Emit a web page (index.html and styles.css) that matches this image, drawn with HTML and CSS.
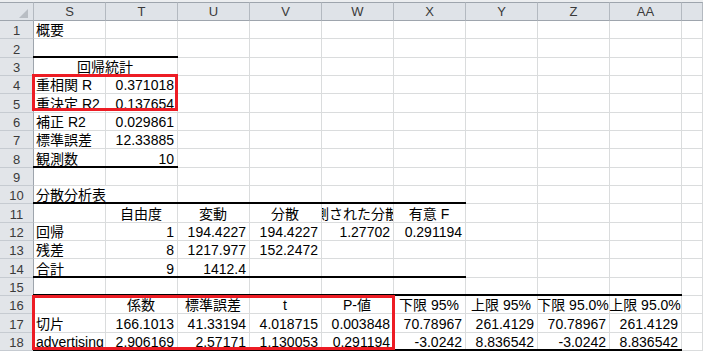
FILE: index.html
```html
<!DOCTYPE html>
<html lang="ja">
<head>
<meta charset="utf-8">
<title>回帰分析</title>
<link rel="stylesheet" href="styles.css">
</head>
<body>
<div class="strip"></div>
<div class="sheet">
  <div class="corner"><svg class="tri" width="9" height="9" viewBox="0 0 9 9"><polygon points="9,0 9,9 0,9" fill="#b8bdc3"/></svg></div>
  <div class="ch">S</div><div class="ch">T</div><div class="ch">U</div><div class="ch">V</div><div class="ch">W</div><div class="ch">X</div><div class="ch">Y</div><div class="ch">Z</div><div class="ch">AA</div><div class="ch"></div>

  <div class="rh">1</div><div class="c">概要</div><div class="c"></div><div class="c"></div><div class="c"></div><div class="c"></div><div class="c"></div><div class="c"></div><div class="c"></div><div class="c"></div><div class="c"></div>

  <div class="rh">2</div><div class="c tb"></div><div class="c tb"></div><div class="c"></div><div class="c"></div><div class="c"></div><div class="c"></div><div class="c"></div><div class="c"></div><div class="c"></div><div class="c"></div>

  <div class="rh">3</div><div class="c m span2">回帰統計</div><div class="c"></div><div class="c"></div><div class="c"></div><div class="c"></div><div class="c"></div><div class="c"></div><div class="c"></div><div class="c"></div>

  <div class="rh">4</div><div class="c">重相関 R</div><div class="c n">0.371018</div><div class="c"></div><div class="c"></div><div class="c"></div><div class="c"></div><div class="c"></div><div class="c"></div><div class="c"></div><div class="c"></div>

  <div class="rh">5</div><div class="c">重決定 R2</div><div class="c n">0.137654</div><div class="c"></div><div class="c"></div><div class="c"></div><div class="c"></div><div class="c"></div><div class="c"></div><div class="c"></div><div class="c"></div>

  <div class="rh">6</div><div class="c">補正 R2</div><div class="c n">0.029861</div><div class="c"></div><div class="c"></div><div class="c"></div><div class="c"></div><div class="c"></div><div class="c"></div><div class="c"></div><div class="c"></div>

  <div class="rh">7</div><div class="c">標準誤差</div><div class="c n">12.33885</div><div class="c"></div><div class="c"></div><div class="c"></div><div class="c"></div><div class="c"></div><div class="c"></div><div class="c"></div><div class="c"></div>

  <div class="rh">8</div><div class="c tb">観測数</div><div class="c n tb">10</div><div class="c"></div><div class="c"></div><div class="c"></div><div class="c"></div><div class="c"></div><div class="c"></div><div class="c"></div><div class="c"></div>

  <div class="rh">9</div><div class="c"></div><div class="c"></div><div class="c"></div><div class="c"></div><div class="c"></div><div class="c"></div><div class="c"></div><div class="c"></div><div class="c"></div><div class="c"></div>

  <div class="rh">10</div><div class="c tb open">分散分析表</div><div class="c tb"></div><div class="c tb"></div><div class="c tb"></div><div class="c tb"></div><div class="c tb"></div><div class="c"></div><div class="c"></div><div class="c"></div><div class="c"></div>

  <div class="rh">11</div><div class="c"></div><div class="c m">自由度</div><div class="c m">変動</div><div class="c m">分散</div><div class="c m clip">観測された分散比</div><div class="c m">有意 F</div><div class="c"></div><div class="c"></div><div class="c"></div><div class="c"></div>

  <div class="rh">12</div><div class="c">回帰</div><div class="c n">1</div><div class="c n">194.4227</div><div class="c n">194.4227</div><div class="c n">1.27702</div><div class="c n">0.291194</div><div class="c"></div><div class="c"></div><div class="c"></div><div class="c"></div>

  <div class="rh">13</div><div class="c">残差</div><div class="c n">8</div><div class="c n">1217.977</div><div class="c n">152.2472</div><div class="c"></div><div class="c"></div><div class="c"></div><div class="c"></div><div class="c"></div><div class="c"></div>

  <div class="rh">14</div><div class="c tb">合計</div><div class="c n tb">9</div><div class="c n tb">1412.4</div><div class="c tb"></div><div class="c tb"></div><div class="c tb"></div><div class="c"></div><div class="c"></div><div class="c"></div><div class="c"></div>

  <div class="rh">15</div><div class="c tb"></div><div class="c tb"></div><div class="c tb"></div><div class="c tb"></div><div class="c tb"></div><div class="c tb"></div><div class="c tb"></div><div class="c tb"></div><div class="c tb"></div><div class="c"></div>

  <div class="rh">16</div><div class="c"></div><div class="c m">係数</div><div class="c m">標準誤差</div><div class="c m">t</div><div class="c m">P-値</div><div class="c m">下限 95%</div><div class="c m">上限 95%</div><div class="c m">下限 95.0%</div><div class="c m">上限 95.0%</div><div class="c"></div>

  <div class="rh">17</div><div class="c">切片</div><div class="c n">166.1013</div><div class="c n">41.33194</div><div class="c n">4.018715</div><div class="c n">0.003848</div><div class="c n">70.78967</div><div class="c n">261.4129</div><div class="c n">70.78967</div><div class="c n">261.4129</div><div class="c"></div>

  <div class="rh">18</div><div class="c tb">advertising</div><div class="c n tb">2.906169</div><div class="c n tb">2.57171</div><div class="c n tb">1.130053</div><div class="c n tb">0.291194</div><div class="c n tb">-3.0242</div><div class="c n tb">8.836542</div><div class="c n tb">-3.0242</div><div class="c n tb">8.836542</div><div class="c"></div>

  <div class="box box1"></div>
  <div class="box box2"></div>
</div>
</body>
</html>
```

FILE: styles.css
```css
* {
  box-sizing: border-box;
  margin: 0;
  padding: 0;
}

html, body {
  background: #fff;
  overflow: hidden;
}

body {
  font-family: "Liberation Sans", "Noto Sans CJK JP", sans-serif;
  font-size: 14px;
  color: #000;
}

.strip {
  height: 2px;
  background: #eceef0;
}

.sheet {
  position: relative;
  display: grid;
  grid-template-columns: 34px repeat(9, 72px) 1fr;
  grid-template-rows: 19px 18px 19px 18px 18px 19px 18px 18px 19px 18px 18px 19px 18px 18px 19px 18px 18px 19px 18px;
}

.corner,
.ch {
  background: #dfe3e8;
  border-top: 1px solid #9ea5ad;
  border-bottom: 1px solid #9ea5ad;
  border-right: 1px solid #b3b9c0;
}

.corner {
  display: flex;
  justify-content: flex-end;
  align-items: flex-end;
  padding: 0 5px 2px 0;
}

.tri {
  display: block;
}

.ch {
  display: flex;
  justify-content: center;
  align-items: center;
  font-size: 13px;
  color: #3a3a3a;
}

.rh {
  background: #e2e5e9;
  border-right: 1px solid #9ea5ad;
  border-bottom: 1px solid #c6cbd1;
  display: flex;
  justify-content: center;
  align-items: flex-end;
  font-size: 13px;
  line-height: 15px;
  color: #3a3a3a;
}

.c {
  position: relative;
  display: flex;
  align-items: flex-end;
  white-space: nowrap;
  border-right: 1px solid #dadcdd;
  border-bottom: 1px solid #dadcdd;
  padding: 0 3px 1px 2px;
  line-height: 13px;
}

.n {
  justify-content: flex-end;
}

.m {
  justify-content: center;
}

.clip {
  overflow: hidden;
}

.open {
  border-right-color: transparent;
}

.span2 {
  grid-column: span 2;
}

.tb::after {
  content: "";
  position: absolute;
  left: -1px;
  right: -1px;
  bottom: -1px;
  height: 2px;
  background: #000;
}

.box {
  position: absolute;
  border: 3px solid #ed1c24;
  pointer-events: none;
}

.box1 {
  left: 32px;
  top: 72px;
  width: 146px;
  height: 37px;
}

.box2 {
  left: 32px;
  top: 293px;
  width: 363px;
  height: 55px;
}
```
